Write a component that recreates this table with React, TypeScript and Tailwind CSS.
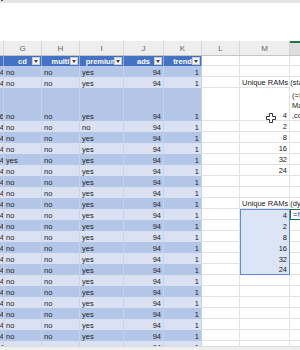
import React from "react";

const W = { f: 4, g: 38, h: 38, i: 44, j: 40, k: 38, l: 38, m: 50, n: 40 };

const rows = Array.from({ length: 24 }, (_, i) => ({
  f: i === 2 ? "6" : "4",
  g: i === 6 ? "yes" : "no",
  h: "no",
  i: i === 3 ? "no" : "yes",
  j: "94",
  k: "1",
}));

const staticVals: Record<number, string> = { 2: "4", 3: "2", 4: "8", 5: "16", 6: "32", 7: "24" };
const dynVals: Record<number, string> = { 11: "4", 12: "2", 13: "8", 14: "16", 15: "32", 16: "24" };

const Filter = () => (
  <div className="absolute right-[1px] top-[1px] w-[8px] h-[8px] bg-[#f4f4f4] border border-[#c9c9c9] flex items-center justify-center">
    <svg width="4" height="3" viewBox="0 0 4 3">
      <path d="M0 0h4L2 3z" fill="#444" />
    </svg>
  </div>
);

const HeadCell = ({ w, label }: { w: number; label: string }) => (
  <div
    style={{ width: w }}
    className="relative shrink-0 h-full bg-[#4472c4] border-r border-[#8eaadb] text-white font-bold flex items-end justify-center pb-[1px] overflow-hidden"
  >
    <span>{label}</span>
    <Filter />
  </div>
);

const Cell = ({
  w,
  band,
  right,
  children,
}: {
  w: number;
  band: boolean;
  right?: boolean;
  children?: React.ReactNode;
}) => (
  <div
    style={{ width: w }}
    className={`shrink-0 h-full border-r border-[#c6d3ea] flex items-end pb-[1px] px-[2px] overflow-hidden ${
      band ? "bg-[#b4c6e7]" : "bg-[#d9e1f2]"
    } ${right ? "justify-end" : "justify-start"}`}
  >
    {children}
  </div>
);

export default function App() {
  return (
    <div className="relative w-[300px] h-[350px] overflow-hidden bg-white text-[7.5px] leading-none text-[#222] font-['Liberation_Sans',Arial,sans-serif]">
      {/* window chrome */}
      <div className="relative h-[3px] bg-[#e4e4e4]">
        <span className="absolute left-[1px] top-0 w-[2px] h-[1px] bg-[#555]" />
      </div>
      <div className="h-[38px] bg-white" />

      {/* column letters */}
      <div className="flex h-[15px] bg-[#eeeeee] border-b border-[#c4c4c4] text-[8px] text-[#666]">
        {(
          [
            ["", W.f],
            ["G", W.g],
            ["H", W.h],
            ["I", W.i],
            ["J", W.j],
            ["K", W.k],
            ["L", W.l],
            ["M", W.m],
          ] as [string, number][]
        ).map(([l, w], idx) => (
          <div
            key={idx}
            style={{ width: w }}
            className="shrink-0 border-r border-[#d6d6d6] flex items-center justify-center pt-[2px]"
          >
            {l}
          </div>
        ))}
        <div className="shrink-0 w-[40px] bg-[#dedede] border-t-2 border-[#217346]" />
      </div>

      {/* table header */}
      <div className="flex h-[10px]">
        <div style={{ width: W.f }} className="shrink-0 h-full bg-[#4472c4] border-r border-[#8eaadb]" />
        <HeadCell w={W.g} label="cd" />
        <HeadCell w={W.h} label="multi" />
        <HeadCell w={W.i} label="premium" />
        <HeadCell w={W.j} label="ads" />
        <HeadCell w={W.k} label="trend" />
        <div style={{ width: W.l }} className="shrink-0 h-full border-r border-b border-[#e2e2e2]" />
        <div style={{ width: W.m }} className="shrink-0 h-full border-r border-b border-[#e2e2e2]" />
        <div style={{ width: W.n }} className="shrink-0 h-full border-b border-[#e2e2e2]" />
      </div>

      {/* data rows */}
      {rows.map((r, i) => {
        const band = i % 2 === 0;
        const tall = i === 2;
        const sel = dynVals[i] !== undefined;
        const selFirst = i === 11;
        const selLast = i === 16;
        return (
          <div key={i} className={`flex ${tall ? "h-[33px]" : "h-[11px]"}`}>
            <div
              style={{ width: W.f }}
              className={`shrink-0 h-full border-r border-[#c6d3ea] flex items-end justify-end pb-[1px] overflow-hidden ${
                band ? "bg-[#b4c6e7]" : "bg-[#d9e1f2]"
              }`}
            >
              <span className="-mr-[1px]">{r.f}</span>
            </div>
            <Cell w={W.g} band={band}>{r.g}</Cell>
            <Cell w={W.h} band={band}>{r.h}</Cell>
            <Cell w={W.i} band={band}>{r.i}</Cell>
            <Cell w={W.j} band={band} right>{r.j}</Cell>
            <Cell w={W.k} band={band} right>{r.k}</Cell>
            <div style={{ width: W.l }} className="shrink-0 h-full border-r border-b border-[#e2e2e2]" />
            <div
              style={{ width: W.m }}
              className={`relative shrink-0 h-full flex items-end pb-[1px] px-[2px] ${
                sel
                  ? `bg-[#dbe5f5] border-x border-[#5b8fd9] ${selFirst ? "border-t" : ""} ${
                      selLast ? "border-b" : ""
                    }`
                  : "border-r border-b border-[#e2e2e2]"
              } ${staticVals[i] || dynVals[i] ? "justify-end" : "justify-start"}`}
            >
              {i === 1 && <span className="whitespace-nowrap">Unique RAMs (static)</span>}
              {i === 10 && <span className="whitespace-nowrap">Unique RAMs (dynamic)</span>}
              {staticVals[i]}
              {dynVals[i]}
            </div>
            <div
              style={{ width: W.n }}
              className={`shrink-0 h-full flex items-end pb-[1px] px-[2px] whitespace-nowrap ${
                i === 11 ? "border border-[#217346]" : "border-b border-[#e2e2e2]"
              } ${i === 1 || i === 10 ? "border-b-0" : ""}`}
            >
              {tall && (
                <div className="flex flex-col gap-[2.5px]">
                  <span>(=INDEX(</span>
                  <span>Ma</span>
                  <span>,co</span>
                </div>
              )}
              {i === 11 && (
                <span>
                  =<span className="text-[#3a6fd8]">M</span>
                </span>
              )}
            </div>
          </div>
        );
      })}

      {/* pointer cursor */}
      <svg className="absolute left-[266px] top-[113px]" width="10" height="10" viewBox="0 0 10 10">
        <path
          d="M3.5 0.5h3v3h3v3h-3v3h-3v-3h-3v-3h3z"
          fill="#fff"
          stroke="#333"
          strokeWidth="1"
        />
      </svg>

      {/* bottom bar */}
      <div className="absolute left-0 right-0 bottom-0 h-[4px] bg-[#efefef] border-t border-[#dcdcdc]" />
    </div>
  );
}
